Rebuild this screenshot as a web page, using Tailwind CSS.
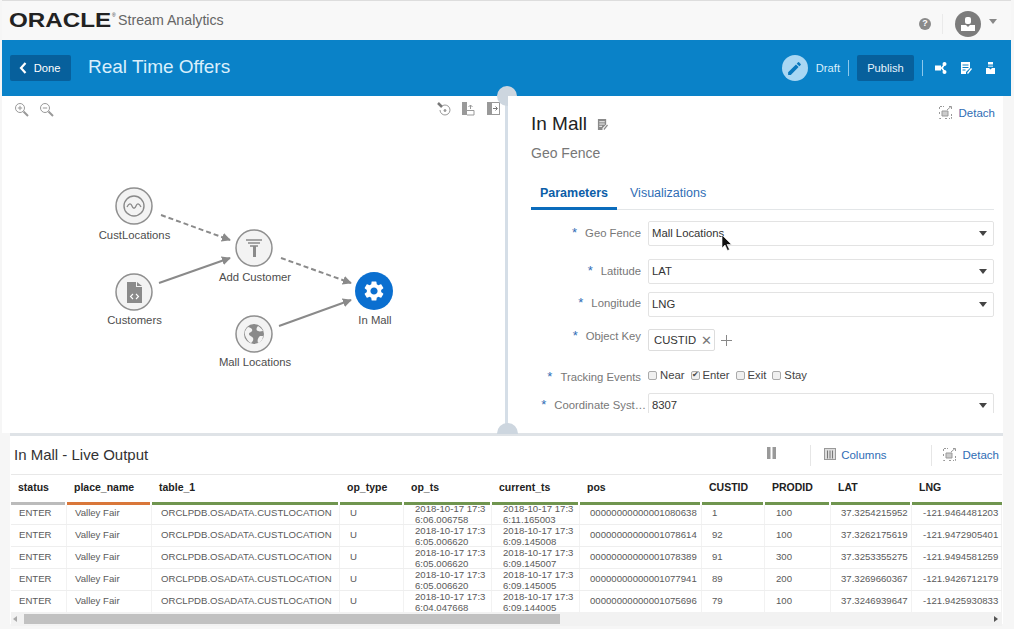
<!DOCTYPE html>
<html lang="en">
<head>
<meta charset="UTF-8">
<title>Oracle Stream Analytics</title>
<script src="https://cdn.jsdelivr.net/npm/@tailwindcss/browser@4"></script>
</head>
<body class="bg-[#f6f6f6]">
<div class="relative w-[1014px] h-[629px] overflow-hidden pl-[2px] pr-[3px] font-['Liberation_Sans',sans-serif] text-[#333]">

  <!-- top header -->
  <header class="flex items-center justify-between h-[40px] bg-[#f8f8f8] border-t border-[#ddd] pl-[7px] pr-[14px]">
    <div class="flex items-center">
      <span class="inline-block w-[103px] origin-left scale-x-[1.24] font-bold text-[19.5px] leading-none text-[#222]">ORACLE</span>
      <span class="w-[4px] -mt-[10px] text-[5px] text-[#333]">®</span>
      <span class="ml-[2px] text-[14.2px] text-[#666]">Stream Analytics</span>
    </div>
    <div class="flex items-center mt-[6px]">
      <span class="flex items-center justify-center w-[12px] h-[12px] rounded-full bg-[#8a8a8a] text-white text-[9px] font-bold">?</span>
      <span class="w-px h-[20px] bg-[#eaeaea] ml-[11px] mr-[12px]"></span>
      <svg class="w-[26px] h-[26px]" viewBox="0 0 26 26"><circle cx="13" cy="13" r="13" fill="#7c7c7c"/><rect x="10" y="6" width="6" height="7" rx="2" fill="#fff"/><path d="M6 14h5l2 2 2-2h5v6H6z" fill="#fff"/></svg>
      <span class="ml-[8px] w-0 h-0 border-x-[4px] border-x-transparent border-t-[5px] border-t-[#888] -mt-[4px]"></span>
    </div>
  </header>

  <!-- blue toolbar -->
  <div class="flex items-center h-[56px] bg-[#0a82c8] pl-[8px] pr-[16px]">
    <button class="flex items-center justify-center gap-[7px] w-[61px] h-[26px] rounded-[2px] bg-[#07609c] text-white text-[11.2px] pr-[2px]">
      <svg class="w-[8px] h-[12px]" viewBox="0 0 8 12"><path d="M6.5 1 2 6l4.5 5" fill="none" stroke="#fff" stroke-width="2.2"/></svg>
      Done
    </button>
    <h1 class="ml-[17px] -mt-[2px] text-[19px] text-[#d9effc]">Real Time Offers</h1>
    <div class="ml-auto flex items-center">
      <span class="flex items-center justify-center w-[26px] h-[26px] rounded-full bg-[#a9d7f3]">
        <svg class="w-[17px] h-[17px]" viewBox="0 0 24 24"><path fill="#0a78bd" d="M3 17.25V21h3.75L17.81 9.94l-3.75-3.75L3 17.25zM20.71 7.04a1 1 0 0 0 0-1.41l-2.34-2.34a1 1 0 0 0-1.41 0l-1.83 1.83 3.75 3.75 1.83-1.83z"/></svg>
      </span>
      <span class="ml-[8px] text-[11.2px] text-[#d9effc]">Draft</span>
      <span class="w-px h-[16px] bg-[#8cc8ec] mx-[8px]"></span>
      <button class="w-[57px] h-[26px] rounded-[2px] bg-[#07609c] text-[#e4f3fc] text-[11.2px]">Publish</button>
      <span class="w-px h-[16px] bg-[#8cc8ec] ml-[8px] mr-[12px]"></span>
      <svg class="w-[12px] h-[12px]" viewBox="0 0 12 12" fill="#fff"><rect x="0" y="3.500" width="6" height="5"/><circle cx="9.500" cy="2" r="2"/><circle cx="9.500" cy="10" r="2"/><path d="M6 5.500 9 2l1 1-2 3 2 3-1 1-3-3.500z"/></svg>
      <svg class="ml-[13px] w-[12px] h-[12px]" viewBox="0 0 12 12"><path fill="#fff" d="M1 0h9v6L6 10v2H1z"/><path stroke="#0a82c8" d="M2.500 3h6M2.500 5.500h6M2.500 8h3"/><path fill="#fff" d="m7 11 4-5 1 1-4 5z"/></svg>
      <svg class="ml-[14px] w-[9px] h-[12px]" viewBox="0 0 9 12" fill="#fff"><path d="M2 0h5v2.500H2z"/><path d="M2 3.500h5v1.500H2z" opacity=".6"/><path d="M0 6h3l1.500 1.500L6 6h3v6H0z"/></svg>
    </div>
  </div>

  <!-- editor area -->
  <div class="flex h-[337px] mr-[8px]">
    <!-- pipeline canvas -->
    <div class="relative w-[503px] bg-white">
      <div class="absolute left-[12px] top-[6px] flex gap-[10px]">
        <svg class="w-[15px] h-[15px]" viewBox="0 0 15 15" fill="none" stroke="#999"><circle cx="6" cy="6" r="4.500"/><path d="M3.800 6h4.400M6 3.800v4.400"/><path d="m9.500 9.500 4.500 4.500" stroke-width="2"/></svg>
        <svg class="w-[15px] h-[15px]" viewBox="0 0 15 15" fill="none" stroke="#999"><circle cx="6" cy="6" r="4.500"/><path d="M3.800 6h4.400"/><path d="m9.500 9.500 4.500 4.500" stroke-width="2"/></svg>
      </div>
      <div class="absolute left-[435px] top-[6px] flex gap-[10px]">
        <svg class="w-[14px] h-[14px]" viewBox="0 0 14 14" fill="none" stroke="#999"><path d="M1 1l4 4" stroke="#777" stroke-width="2.500"/><path d="M5 4a5 5 0 1 1-2 4" /><circle cx="8" cy="8.500" r="1" fill="#999"/></svg>
        <svg class="w-[14px] h-[14px]" viewBox="0 0 14 14"><path fill="#999" d="M1 0h5v13H1z"/><path fill="none" stroke="#999" d="M6 8.500h7v4.500H6M9.500 3v4M7.500 5l2-2 2 2"/></svg>
        <svg class="w-[13px] h-[13px] ml-[2px]" viewBox="0 0 13 13"><rect x=".5" y=".5" width="12" height="12" fill="#fff" stroke="#999"/><path fill="#999" d="M1 1h4v11H1z"/><path stroke="#777" fill="none" d="M6 6.500h4M8.500 4.500l2 2-2 2"/></svg>
      </div>
      <svg class="absolute left-0 top-0 w-[503px] h-[337px]" viewBox="2 96 503 337" font-size="11.3" fill="#4d4d4d" text-anchor="middle">
        <defs>
          <marker id="arrow" viewBox="0 0 10 10" refX="9" refY="5" markerWidth="9" markerHeight="9" markerUnits="userSpaceOnUse" orient="auto"><path d="M0 0 10 5 0 10z" fill="#8a8a8a"/></marker>
        </defs>
        <g stroke="#8a8a8a" stroke-width="2" fill="none">
          <path d="M161 215 230 240" stroke-dasharray="5 3" marker-end="url(#arrow)"/>
          <path d="M159 283 230 258" marker-end="url(#arrow)"/>
          <path d="M281 258 351 283" stroke-dasharray="5 3" marker-end="url(#arrow)"/>
          <path d="M279 326 351 300" marker-end="url(#arrow)"/>
        </g>
        <g fill="#f3f3f3" stroke="#8f8f8f" stroke-width="1.5">
          <circle cx="134" cy="206" r="18"/>
          <circle cx="254" cy="248" r="18"/>
          <circle cx="134" cy="292" r="18"/>
          <circle cx="254" cy="334" r="18"/>
        </g>
        <circle cx="374" cy="291" r="19" fill="#0a6fd0"/>
        <!-- wave -->
        <circle cx="134" cy="206" r="10" fill="none" stroke="#8a8a8a" stroke-width="1.4"/>
        <path d="M127 207c2-4 4-4 5-1s3 3 4 0 3-3 5 1" fill="none" stroke="#8a8a8a" stroke-width="1.3"/>
        <!-- filter -->
        <path d="M246 240h16M248 243h12M250 246h8" stroke="#8a8a8a" stroke-width="1.5"/>
        <path d="M253 246h3v11h-3z" fill="#8a8a8a"/>
        <!-- file -->
        <path d="M127 282h9v5h6v16h-15z" fill="#8a8a8a"/>
        <path d="M137 282l5 4h-5z" fill="#8a8a8a"/>
        <path d="M133 294l-2.500 2.500 2.500 2.500M136 294l2.500 2.500-2.500 2.500" fill="none" stroke="#fff" stroke-width="1.100"/>
        <!-- globe -->
        <circle cx="254" cy="334" r="10" fill="#8a8a8a"/>
        <path d="M248 327c3 1 5 2 4 4s-3 1-3 3 3 2 4 4-1 4-2 5c-3-1-5-5-6-8s1-6 3-8zM258 326c2 1 4 3 5 5-2 0-3 1-5 0s-2-3 0-5zM260 336l3 0c0 3-2 6-5 7-1-3 0-5 2-7z" fill="#f3f3f3"/>
        <!-- gear -->
        <svg x="362" y="279" width="24" height="24" viewBox="0 0 24 24"><path fill="#fff" d="M19.14 12.94c.04-.3.06-.61.06-.94 0-.32-.02-.64-.07-.94l2.03-1.58a.49.49 0 0 0 .12-.61l-1.920-3.320a.488.488 0 0 0-.59-.22l-2.390.96c-.5-.38-1.030-.7-1.620-.94l-.36-2.540a.484.484 0 0 0-.48-.41h-3.840c-.24 0-.43.17-.47.41l-.36 2.540c-.59.24-1.130.57-1.620.94l-2.390-.96c-.22-.08-.47 0-.59.22L2.740 8.870c-.12.21-.08.47.12.61l2.030 1.580c-.05.3-.09.63-.09.94s.02.64.07.94l-2.030 1.580a.49.49 0 0 0-.12.61l1.920 3.320c.12.22.37.29.59.22l2.390-.96c.5.38 1.030.7 1.620.94l.36 2.54c.05.24.24.41.48.41h3.840c.24 0 .44-.17.47-.41l.36-2.54c.59-.24 1.130-.56 1.620-.94l2.39.96c.22.08.47 0 .59-.22l1.920-3.320c.12-.22.07-.47-.12-.61l-2.010-1.580zM12 15.600c-1.980 0-3.600-1.620-3.600-3.600s1.620-3.600 3.600-3.600 3.600 1.620 3.600 3.600-1.620 3.600-3.600 3.600z"/></svg>
        <text x="134.500" y="239">CustLocations</text>
        <text x="255" y="281">Add Customer</text>
        <text x="134.500" y="324">Customers</text>
        <text x="255" y="366">Mall Locations</text>
        <text x="375" y="324">In Mall</text>
      </svg>
    </div>

    <!-- vertical splitter -->
    <div class="relative w-[3px] bg-[#d5dee7]">
      <span class="absolute -left-[8px] -top-[10px] w-[20px] h-[20px] rounded-full bg-[#cdd6df]"></span>
    </div>

    <!-- properties -->
    <div class="relative flex-1 bg-white overflow-hidden pl-[23px] pr-[9px]">
      <div class="absolute right-[8px] top-[9px] flex items-center gap-[7px] text-[11.500px] text-[#2f6db5]">
        <svg class="w-[13px] h-[13px] -mt-[3px]" viewBox="0 0 13 13" fill="none" stroke="#999"><path d="M.5 3V.5H5M8 12.500h-3M.5 6v3M.5 12v.500H3M12.500 8v4.500H10" stroke-dasharray="2 1"/><path d="M3 5h6v5H3z" fill="#ccc"/><path d="M8 4l4-3.500M10 .5h2.500V3"/></svg>
        Detach
      </div>
      <div class="flex items-center pt-[17px] gap-[10px]">
        <h2 class="text-[19px] leading-[22px] text-[#222]">In Mall</h2>
        <svg class="w-[11px] h-[11px] mt-[1px]" viewBox="0 0 12 12"><path fill="#8a8a8a" d="M1 0h9v6L6 10v2H1z"/><path stroke="#fff" d="M2.500 3h6M2.500 5.500h6M2.500 8h3"/><path fill="#8a8a8a" d="m7 11 4-5 1 1-4 5z"/></svg>
      </div>
      <p class="mt-[9px] text-[14px] leading-[18px] text-[#777]">Geo Fence</p>
      <div class="mt-[21px] flex h-[27px] border-b border-[#e3e6e8] text-[12.500px]">
        <span class="w-[86px] text-center font-bold text-[#0b5ea8] border-b-[3px] border-[#0b6cbc] h-[27px] leading-[21px]">Parameters</span>
        <span class="ml-[13px] leading-[21px] text-[#2f6db5]">Visualizations</span>
      </div>

      <div class="mt-[11px] h-[192px] overflow-hidden text-[11.300px]">
        <div class="flex items-center h-[25px]">
          <label class="w-[110px] text-right text-[#777] -mt-[2px]"><span class="text-[#2f6db5] mr-[8px] text-[13px]">*</span>Geo Fence</label>
          <div class="ml-[7px] flex-1 flex items-center justify-between h-[25px] border border-[#e3e3e3] rounded-[2px] pl-[3px] pr-[6px] text-[#333]">Mall Locations<span class="w-0 h-0 border-x-[4px] border-x-transparent border-t-[5px] border-t-[#444]"></span></div>
        </div>
        <div class="flex items-center h-[25px] mt-[13px]">
          <label class="w-[110px] text-right text-[#777] -mt-[2px]"><span class="text-[#2f6db5] mr-[8px] text-[13px]">*</span>Latitude</label>
          <div class="ml-[7px] flex-1 flex items-center justify-between h-[25px] border border-[#e3e3e3] rounded-[2px] pl-[3px] pr-[6px] text-[#333]">LAT<span class="w-0 h-0 border-x-[4px] border-x-transparent border-t-[5px] border-t-[#444]"></span></div>
        </div>
        <div class="flex items-center h-[25px] mt-[8px]">
          <label class="w-[110px] text-right text-[#777] -mt-[3px]"><span class="text-[#2f6db5] mr-[8px] text-[13px]">*</span>Longitude</label>
          <div class="ml-[7px] flex-1 flex items-center justify-between h-[25px] border border-[#e3e3e3] rounded-[2px] pl-[3px] pr-[6px] text-[#333]">LNG<span class="w-0 h-0 border-x-[4px] border-x-transparent border-t-[5px] border-t-[#444]"></span></div>
        </div>
        <div class="flex items-start h-[22px] mt-[12px]">
          <label class="w-[110px] text-right text-[#777] -mt-[3px]"><span class="text-[#2f6db5] mr-[8px] text-[13px]">*</span>Object Key</label>
          <div class="ml-[7px] flex items-center gap-[5px] w-[67px] h-[22px] border border-[#ddd] rounded-[2px] pl-[5px] text-[#333]">CUSTID<span class="text-[#777] text-[13px] leading-none">✕</span></div>
          <svg class="ml-[6px] mt-[6px] w-[11px] h-[11px]" viewBox="0 0 11 11"><path d="M5.500 0v11M0 5.500h11" stroke="#888"/></svg>
        </div>
        <div class="flex items-center h-[18px] mt-[16px]">
          <label class="w-[110px] text-right text-[#777] mt-[1px]"><span class="text-[#2f6db5] mr-[8px] text-[13px]">*</span>Tracking Events</label>
          <div class="ml-[7px] flex items-center text-[#444] -mt-[2px]">
            <span class="w-[9px] h-[9px] border border-[#aaa] rounded-[2px] bg-[#f0f0f0] mr-[3px]"></span>Near
            <span class="flex items-center justify-center w-[9px] h-[9px] border border-[#aaa] rounded-[2px] bg-[#f0f0f0] ml-[6px] mr-[3px] text-[8px] leading-none">✔</span>Enter
            <span class="w-[9px] h-[9px] border border-[#aaa] rounded-[2px] bg-[#f0f0f0] ml-[6px] mr-[3px]"></span>Exit
            <span class="w-[9px] h-[9px] border border-[#aaa] rounded-[2px] bg-[#f0f0f0] ml-[6px] mr-[3px]"></span>Stay
          </div>
        </div>
        <div class="flex items-center h-[25px] mt-[8px]">
          <label class="w-[115px] text-right text-[#777] whitespace-nowrap -mt-[2px] shrink-0"><span class="text-[#2f6db5] mr-[8px] text-[13px]">*</span>Coordinate Syst…</label>
          <div class="ml-[2px] flex-1 flex items-center justify-between h-[25px] border border-[#e3e3e3] rounded-[2px] pl-[3px] pr-[6px] text-[#333]">8307<span class="w-0 h-0 border-x-[4px] border-x-transparent border-t-[5px] border-t-[#444]"></span></div>
        </div>
      </div>
    </div>
  </div>

  <!-- live output -->
  <div class="relative ml-[8px] mr-[8px] border-t-[3px] border-[#dfe3e7] bg-white h-[191px]">
    <span class="absolute left-[487px] -top-[13px] w-[21px] h-[11px] rounded-t-full bg-[#cdd6df]"></span>
    <div class="flex items-center h-[38px] pl-[4px] pr-[4px]">
      <h3 class="text-[15px] text-[#333]">In Mall - Live Output</h3>
      <div class="ml-auto mt-[1px] flex items-center text-[11.500px] text-[#2f6db5]">
        <svg class="w-[9px] h-[12px] -mt-[5px]" viewBox="0 0 9 12" fill="#999"><path d="M0 0h3.500v12H0zM5.500 0H9v12H5.500z"/></svg>
        <span class="w-px h-[21px] bg-[#e6e6e6] ml-[34px] mr-[13px]"></span>
        <svg class="w-[12px] h-[12px] -mt-[4px]" viewBox="0 0 12 12"><rect x=".5" y=".5" width="11" height="11" fill="#ddd" stroke="#999"/><path d="M3.500 2.500v8M6 2.500v8M8.500 2.500v8" stroke="#777"/></svg>
        <span class="ml-[5px]">Columns</span>
        <span class="w-px h-[21px] bg-[#e6e6e6] ml-[44px] mr-[11px]"></span>
        <svg class="w-[13px] h-[13px] -mt-[3px]" viewBox="0 0 13 13" fill="none" stroke="#999"><path d="M.5 3V.5H5M8 12.500h-3M.5 6v3M.5 12v.500H3M12.500 8v4.500H10" stroke-dasharray="2 1"/><path d="M3 5h6v5H3z" fill="#ccc"/><path d="M8 4l4-3.500M10 .5h2.500V3"/></svg>
        <span class="ml-[7px]">Detach</span>
      </div>
    </div>

    <!-- table -->
    <div class="ml-px w-[991px] border-t border-[#e8e8e8] text-[9.600px] text-[#5a5a5a]">
      <div class="relative z-10 grid grid-cols-[56px_85px_188px_64px_88px_88px_122px_63px_66px_81px_90px] h-[30px] bg-white text-[10.500px] font-bold text-[#222] *:pl-[7px] *:pt-[5px] *:border-b-[3px] *:border-[#70954f] *:mr-[2px]">
        <div class="!border-[#bbb]">status</div>
        <div class="!border-[#d9773a]">place_name</div>
        <div>table_1</div>
        <div>op_type</div>
        <div>op_ts</div>
        <div>current_ts</div>
        <div>pos</div>
        <div>CUSTID</div>
        <div>PRODID</div>
        <div>LAT</div>
        <div class="!mr-0">LNG</div>
      </div>
      <div class="h-[107px] overflow-hidden">
        <div class="-mt-[2px] *:grid *:grid-cols-[56px_85px_188px_64px_88px_88px_122px_63px_66px_81px_90px] *:h-[22px] *:border-b *:border-[#eee] **:data-c:flex **:data-c:items-center **:data-c:border-r **:data-c:border-[#f2f2f2] **:data-c:pl-[8px] **:data-t:leading-[11px] **:data-t:pl-[11px] **:data-t:overflow-hidden **:data-w:pl-[10px] **:data-n:pl-[11px]">
          <div>
            <div data-c>ENTER</div><div data-c>Valley Fair</div><div data-c class="!pl-[9px]">ORCLPDB.OSADATA.CUSTLOCATION</div><div data-c data-w>U</div><div data-c data-t>2018-10-17 17:3<br>6:06.006758</div><div data-c data-t>2018-10-17 17:3<br>6:11.165003</div><div data-c data-w>00000000000001080638</div><div data-c data-w>1</div><div data-c data-n>100</div><div data-c data-w>37.3254215952</div><div data-c data-n>-121.9464481203</div>
          </div>
          <div>
            <div data-c>ENTER</div><div data-c>Valley Fair</div><div data-c class="!pl-[9px]">ORCLPDB.OSADATA.CUSTLOCATION</div><div data-c data-w>U</div><div data-c data-t>2018-10-17 17:3<br>6:05.006620</div><div data-c data-t>2018-10-17 17:3<br>6:09.145008</div><div data-c data-w>00000000000001078614</div><div data-c data-w>92</div><div data-c data-n>100</div><div data-c data-w>37.3262175619</div><div data-c data-n>-121.9472905401</div>
          </div>
          <div>
            <div data-c>ENTER</div><div data-c>Valley Fair</div><div data-c class="!pl-[9px]">ORCLPDB.OSADATA.CUSTLOCATION</div><div data-c data-w>U</div><div data-c data-t>2018-10-17 17:3<br>6:05.006620</div><div data-c data-t>2018-10-17 17:3<br>6:09.145007</div><div data-c data-w>00000000000001078389</div><div data-c data-w>91</div><div data-c data-n>300</div><div data-c data-w>37.3253355275</div><div data-c data-n>-121.9494581259</div>
          </div>
          <div>
            <div data-c>ENTER</div><div data-c>Valley Fair</div><div data-c class="!pl-[9px]">ORCLPDB.OSADATA.CUSTLOCATION</div><div data-c data-w>U</div><div data-c data-t>2018-10-17 17:3<br>6:05.006620</div><div data-c data-t>2018-10-17 17:3<br>6:09.145005</div><div data-c data-w>00000000000001077941</div><div data-c data-w>89</div><div data-c data-n>200</div><div data-c data-w>37.3269660367</div><div data-c data-n>-121.9426712179</div>
          </div>
          <div>
            <div data-c>ENTER</div><div data-c>Valley Fair</div><div data-c class="!pl-[9px]">ORCLPDB.OSADATA.CUSTLOCATION</div><div data-c data-w>U</div><div data-c data-t>2018-10-17 17:3<br>6:04.047668</div><div data-c data-t>2018-10-17 17:3<br>6:09.144005</div><div data-c data-w>00000000000001075696</div><div data-c data-w>79</div><div data-c data-n>100</div><div data-c data-w>37.3246939647</div><div data-c data-n>-121.9425930833</div>
          </div>
        </div>
      </div>
      <!-- scrollbar -->
      <div class="flex items-center h-[14px] bg-[#f2f2f2]">
        <span class="ml-[2px] w-0 h-0 border-y-[3px] border-y-transparent border-r-[4px] border-r-[#aaa]"></span>
        <span class="ml-[7px] w-[536px] h-[10px] bg-[#c1c1c1]"></span>
        <span class="ml-auto mr-[4px] w-0 h-0 border-y-[3px] border-y-transparent border-l-[4px] border-l-[#555]"></span>
      </div>
    </div>
  </div>

  <!-- mouse pointer from the recording -->
  <svg class="absolute left-[721px] top-[235px] w-[11px] h-[16px]" viewBox="0 0 11 16"><path d="M1 0v13l3-3 2.500 5.500 2-1L6 9.500h4.500z" fill="#111" stroke="#fff" stroke-width=".6"/></svg>
</div>
</body>
</html>
